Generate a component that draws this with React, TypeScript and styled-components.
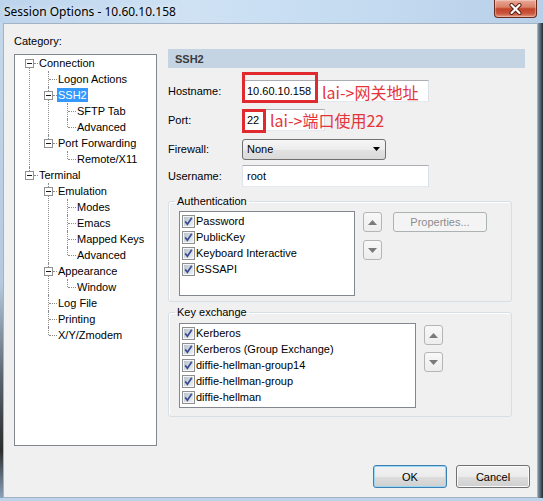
import React from 'react';
import styled, { createGlobalStyle, css } from 'styled-components';

const GlobalStyle = createGlobalStyle`
  html, body {
    margin: 0;
    padding: 0;
    background: #fff;
  }
  body {
    font-family: "Liberation Sans", Arial, sans-serif;
    font-size: 11px;
    color: #000;
  }
`;

type TreeItem = { label: string; selected?: boolean; children?: TreeItem[] };

const TREE: TreeItem[] = [
  {
    label: 'Connection',
    children: [
      { label: 'Logon Actions' },
      { label: 'SSH2', selected: true, children: [{ label: 'SFTP Tab' }, { label: 'Advanced' }] },
      { label: 'Port Forwarding', children: [{ label: 'Remote/X11' }] },
    ],
  },
  {
    label: 'Terminal',
    children: [
      {
        label: 'Emulation',
        children: [{ label: 'Modes' }, { label: 'Emacs' }, { label: 'Mapped Keys' }, { label: 'Advanced' }],
      },
      { label: 'Appearance', children: [{ label: 'Window' }] },
      { label: 'Log File' },
      { label: 'Printing' },
      { label: 'X/Y/Zmodem' },
    ],
  },
];

const AUTH = ['Password', 'PublicKey', 'Keyboard Interactive', 'GSSAPI'];
const KEX = ['Kerberos', 'Kerberos (Group Exchange)', 'diffie-hellman-group14', 'diffie-hellman-group', 'diffie-hellman'];

const lineX = (level: number) => 14 + 19 * level;

/* window frame */

const Window = styled.div`
  width: 543px;
  height: 501px;
  display: flex;
  flex-direction: column;
  overflow: hidden;
  background: #bcd3ea;
`;

const TitleBar = styled.div`
  height: 23px;
  flex: none;
  display: flex;
  align-items: flex-start;
  background: linear-gradient(to right, #bcd4ec 0%, #cfe2f4 35%, #c3daf0 70%, #b7cfe8 100%);
`;

const Title = styled.div`
  font-family: "Noto Sans", "Open Sans", sans-serif;
  font-size: 12px;
  line-height: 16px;
  padding: 4px 0 0 4px;
  color: #000;
  text-shadow: 0 0 6px rgba(255, 255, 255, 0.9);
`;

const CloseButton = styled.div`
  margin-left: auto;
  margin-right: 6px;
  width: 43px;
  height: 18px;
  box-sizing: border-box;
  border: 1px solid #6b2a1e;
  border-top: none;
  border-radius: 0 0 4px 4px;
  background: linear-gradient(#e9a796 0%, #da8168 42%, #c2432a 52%, #c9553b 78%, #e0907a 100%);
  box-shadow: inset 0 0 1px 1px rgba(255, 255, 255, 0.35);
  display: flex;
  align-items: center;
  justify-content: center;
`;

const FrameMiddle = styled.div`
  flex: 1;
  display: flex;
  min-height: 0;
`;

const LeftEdge = styled.div`
  width: 3px;
  flex: none;
  background: linear-gradient(#c4d8ec 0%, #b4c9de 55%, #59636e 75%, #2c2c2c 90%, #8aa3bc 100%);
`;

const RightEdge = styled.div`
  width: 5px;
  flex: none;
  background: linear-gradient(to right, #7d95ad, #2a2a2a);
`;

const BottomEdge = styled.div`
  height: 3px;
  flex: none;
  background: #bcd3ea;
`;

const Client = styled.div`
  flex: 1;
  display: flex;
  flex-direction: column;
  background: #f0f0f0;
  border: 1px solid #a3b3c4;
`;

const Main = styled.div`
  display: flex;
  padding: 9px 0 0 10px;
`;

/* category tree */

const LeftColumn = styled.div`
  width: 143px;
  display: flex;
  flex-direction: column;
`;

const CategoryLabel = styled.div`
  line-height: 14px;
  padding-top: 1px;
`;

const TreeBox = styled.div`
  margin-top: 6px;
  height: 392px;
  box-sizing: border-box;
  border: 1px solid #828790;
  background: #fff;
  overflow: hidden;
`;

const TreeList = styled.ul`
  list-style: none;
  margin: 0;
  padding: 0;
`;

const TreeNode = styled.li<{ $level: number; $last: boolean; $startMid: boolean }>`
  position: relative;
  &::before {
    content: '';
    position: absolute;
    left: ${(p) => lineX(p.$level)}px;
    top: ${(p) => (p.$startMid ? 8 : 0)}px;
    ${(p) => (p.$last ? 'height: 8px;' : 'bottom: 0;')}
    border-left: 1px dotted #8c8c8c;
  }
`;

const Row = styled.div<{ $level: number }>`
  position: relative;
  height: 16px;
  display: flex;
  align-items: center;
  padding-left: ${(p) => lineX(p.$level) + 9}px;
  white-space: nowrap;
`;

const Connector = styled.span<{ $level: number; $box: boolean }>`
  position: absolute;
  left: ${(p) => lineX(p.$level) + (p.$box ? 5 : 1)}px;
  width: ${(p) => (p.$box ? 4 : 8)}px;
  top: 8px;
  border-top: 1px dotted #8c8c8c;
`;

const Expander = styled.span<{ $level: number }>`
  position: absolute;
  left: ${(p) => lineX(p.$level) - 4}px;
  top: 4px;
  width: 9px;
  height: 9px;
  box-sizing: border-box;
  border: 1px solid #919191;
  background: #fff;
  &::after {
    content: '';
    position: absolute;
    left: 1px;
    top: 3px;
    width: 5px;
    height: 1px;
    background: #1a1a1a;
  }
`;

const NodeLabel = styled.span<{ $selected?: boolean }>`
  padding: 0 1px;
  line-height: 14px;
  ${(p) =>
    p.$selected &&
    css`
      background: #3399ff;
      color: #fff;
    `}
`;

const renderNodes = (items: TreeItem[], level: number, isRoot: boolean) => (
  <TreeList>
    {items.map((item, i) => (
      <TreeNode
        key={item.label + i}
        $level={level}
        $last={i === items.length - 1}
        $startMid={isRoot && i === 0}
      >
        <Row $level={level}>
          <Connector $level={level} $box={!!item.children} />
          {item.children && <Expander $level={level} />}
          <NodeLabel $selected={item.selected}>{item.label}</NodeLabel>
        </Row>
        {item.children && renderNodes(item.children, level + 1, false)}
      </TreeNode>
    ))}
  </TreeList>
);

/* right panel */

const Panel = styled.div`
  margin-left: 11px;
  margin-top: 16px;
  width: 357px;
  display: flex;
  flex-direction: column;
`;

const PanelHeader = styled.div`
  height: 19px;
  background: #c4d4e3;
  display: flex;
  align-items: center;
  padding-left: 7px;
  font-weight: bold;
  color: #3c3c3c;
`;

const FormRow = styled.div<{ $top: number }>`
  display: flex;
  align-items: center;
  height: 22px;
  margin-top: ${(p) => p.$top}px;
`;

const FieldLabel = styled.div`
  width: 74px;
  flex: none;
`;

const TextField = styled.div<{ $width: number }>`
  position: relative;
  width: ${(p) => p.$width}px;
  height: 22px;
  box-sizing: border-box;
  background: #fff;
  border: 1px solid;
  border-color: #abadb3 #dbdfe6 #e3e9ef #e2e3ea;
  display: flex;
  align-items: center;
  padding-left: 4px;
`;

const RedMark = styled.span<{ $top: number; $w: number; $h: number }>`
  position: absolute;
  left: -1px;
  top: ${(p) => p.$top}px;
  width: ${(p) => p.$w}px;
  height: ${(p) => p.$h}px;
  box-sizing: border-box;
  border: 3px solid #e02a30;
`;

const RedNote = styled.span<{ $left: number; $top: number }>`
  position: absolute;
  left: ${(p) => p.$left}px;
  top: ${(p) => p.$top}px;
  font-family: "Noto Sans CJK SC", "Noto Sans", sans-serif;
  font-size: 16px;
  line-height: 20px;
  color: #e5353b;
  white-space: nowrap;
`;

const Select = styled.div`
  width: 144px;
  height: 21px;
  box-sizing: border-box;
  border: 1px solid #707070;
  border-radius: 3px;
  background: linear-gradient(#f6f6f6 0%, #ececec 50%, #e2e2e2 51%, #dadada 100%);
  display: flex;
  align-items: center;
  padding: 0 5px 0 4px;
  justify-content: space-between;
`;

const Group = styled.fieldset<{ $top: number; $pt: number; $pb: number }>`
  margin: ${(p) => p.$top}px 0 0 0;
  width: 344px;
  box-sizing: border-box;
  border: 1px solid #d5dfe5;
  border-radius: 3px;
  box-shadow: inset 1px 1px 0 #fff;
  padding: ${(p) => p.$pt}px 10px ${(p) => p.$pb}px 10px;
  min-width: 0;
  display: flex;
  align-items: flex-start;
`;

const Legend = styled.legend`
  padding: 0 2px;
  margin-left: -4px;
  line-height: 14px;
`;

const ListBox = styled.div<{ $width: number }>`
  width: ${(p) => p.$width}px;
  height: 85px;
  box-sizing: border-box;
  border: 1px solid #828790;
  background: #fff;
  padding: 1px 0 0 2px;
  flex: none;
`;

const CheckRow = styled.div`
  height: 16px;
  display: flex;
  align-items: center;
  gap: 1px;
  white-space: nowrap;
`;

const ArrowColumn = styled.div<{ $mt: number; $gap: number }>`
  display: flex;
  flex-direction: column;
  gap: ${(p) => p.$gap}px;
  margin: ${(p) => p.$mt}px 0 0 8px;
`;

const ArrowButton = styled.div`
  width: 19px;
  height: 20px;
  box-sizing: border-box;
  border: 1px solid #b5b5b5;
  border-radius: 3px;
  background: linear-gradient(#f8f8f8, #ededed);
  display: flex;
  align-items: center;
  justify-content: center;
`;

const DisabledButton = styled.div`
  margin: 1px 0 0 11px;
  width: 94px;
  height: 20px;
  box-sizing: border-box;
  border: 1px solid #adb2b5;
  border-radius: 3px;
  background: #f4f4f4;
  color: #8d8d8d;
  display: flex;
  align-items: center;
  justify-content: center;
`;

/* footer */

const Footer = styled.div`
  margin-top: auto;
  display: flex;
  justify-content: flex-end;
  gap: 9px;
  padding: 0 7px 9px 0;
`;

const DialogButton = styled.div<{ $default?: boolean }>`
  width: 74px;
  height: 23px;
  box-sizing: border-box;
  border: 1px solid ${(p) => (p.$default ? '#3c7fb1' : '#707070')};
  border-radius: 3px;
  background: linear-gradient(#f2f2f2 0%, #ebebeb 50%, #dddddd 51%, #cfcfcf 100%);
  box-shadow: ${(p) => (p.$default ? 'inset 0 0 0 1px #9bd8f7' : 'inset 0 0 0 1px #fbfbfb')};
  display: flex;
  align-items: center;
  justify-content: center;
`;

const Checkbox = () => (
  <svg width="13" height="13" viewBox="0 0 13 13">
    <defs>
      <linearGradient id="cbFill" x1="0" y1="0" x2="1" y2="1">
        <stop offset="0" stopColor="#b9c2d0" />
        <stop offset="1" stopColor="#eef0f4" />
      </linearGradient>
    </defs>
    <rect x="0.5" y="0.5" width="12" height="12" fill="#f6f6f6" stroke="#8e8f8f" />
    <rect x="2" y="2" width="9" height="9" fill="url(#cbFill)" />
    <path d="M3.2 6.4 L5.4 9.2 L9.8 2.8" fill="none" stroke="#3a4f8f" strokeWidth="1.7" />
  </svg>
);

const Triangle = ({ down }: { down?: boolean }) => (
  <svg width="9" height="5" viewBox="0 0 9 5">
    <path d={down ? 'M0 0 H9 L4.5 5 Z' : 'M0 5 H9 L4.5 0 Z'} fill="#7a7a7a" />
  </svg>
);

const CloseGlyph = () => (
  <svg width="15" height="12" viewBox="0 0 15 12">
    <path d="M3.5 2 L11.5 10 M11.5 2 L3.5 10" stroke="#5a1a10" strokeWidth="4" strokeLinecap="round" />
    <path d="M3.5 2 L11.5 10 M11.5 2 L3.5 10" stroke="#fff" strokeWidth="2.2" strokeLinecap="round" />
  </svg>
);

const App = () => (
  <>
    <GlobalStyle />
    <Window>
      <TitleBar>
        <Title>Session Options - 10.60.10.158</Title>
        <CloseButton>
          <CloseGlyph />
        </CloseButton>
      </TitleBar>
      <FrameMiddle>
        <LeftEdge />
        <Client>
          <Main>
            <LeftColumn>
              <CategoryLabel>Category:</CategoryLabel>
              <TreeBox>{renderNodes(TREE, 0, true)}</TreeBox>
            </LeftColumn>

            <Panel>
              <PanelHeader>SSH2</PanelHeader>

              <FormRow $top={12}>
                <FieldLabel>Hostname:</FieldLabel>
                <TextField $width={187}>
                  10.60.10.158
                  <RedMark $top={-9} $w={76} $h={31} />
                  <RedNote $left={79} $top={1}>lai-&gt;网关地址</RedNote>
                </TextField>
              </FormRow>

              <FormRow $top={7}>
                <FieldLabel>Port:</FieldLabel>
                <TextField $width={83}>
                  22
                  <RedMark $top={-1} $w={24} $h={24} />
                  <RedNote $left={27} $top={0}>lai-&gt;端口使用22</RedNote>
                </TextField>
              </FormRow>

              <FormRow $top={7}>
                <FieldLabel>Firewall:</FieldLabel>
                <Select>
                  None
                  <svg width="7" height="4" viewBox="0 0 7 4">
                    <path d="M0 0 H7 L3.5 4 Z" fill="#000" />
                  </svg>
                </Select>
              </FormRow>

              <FormRow $top={5}>
                <FieldLabel>Username:</FieldLabel>
                <TextField $width={187}>root</TextField>
              </FormRow>

              <Group $top={7} $pt={3} $pb={5}>
                <Legend>Authentication</Legend>
                <ListBox $width={176}>
                  {AUTH.map((a) => (
                    <CheckRow key={a}>
                      <Checkbox />
                      {a}
                    </CheckRow>
                  ))}
                </ListBox>
                <ArrowColumn $mt={1} $gap={8}>
                  <ArrowButton>
                    <Triangle />
                  </ArrowButton>
                  <ArrowButton>
                    <Triangle down />
                  </ArrowButton>
                </ArrowColumn>
                <DisabledButton>Properties...</DisabledButton>
              </Group>

              <Group $top={3} $pt={4} $pb={8}>
                <Legend>Key exchange</Legend>
                <ListBox $width={237}>
                  {KEX.map((k) => (
                    <CheckRow key={k}>
                      <Checkbox />
                      {k}
                    </CheckRow>
                  ))}
                </ListBox>
                <ArrowColumn $mt={2} $gap={7}>
                  <ArrowButton>
                    <Triangle />
                  </ArrowButton>
                  <ArrowButton>
                    <Triangle down />
                  </ArrowButton>
                </ArrowColumn>
              </Group>
            </Panel>
          </Main>

          <Footer>
            <DialogButton $default>OK</DialogButton>
            <DialogButton>Cancel</DialogButton>
          </Footer>
        </Client>
        <RightEdge />
      </FrameMiddle>
      <BottomEdge />
    </Window>
  </>
);

export default App;
